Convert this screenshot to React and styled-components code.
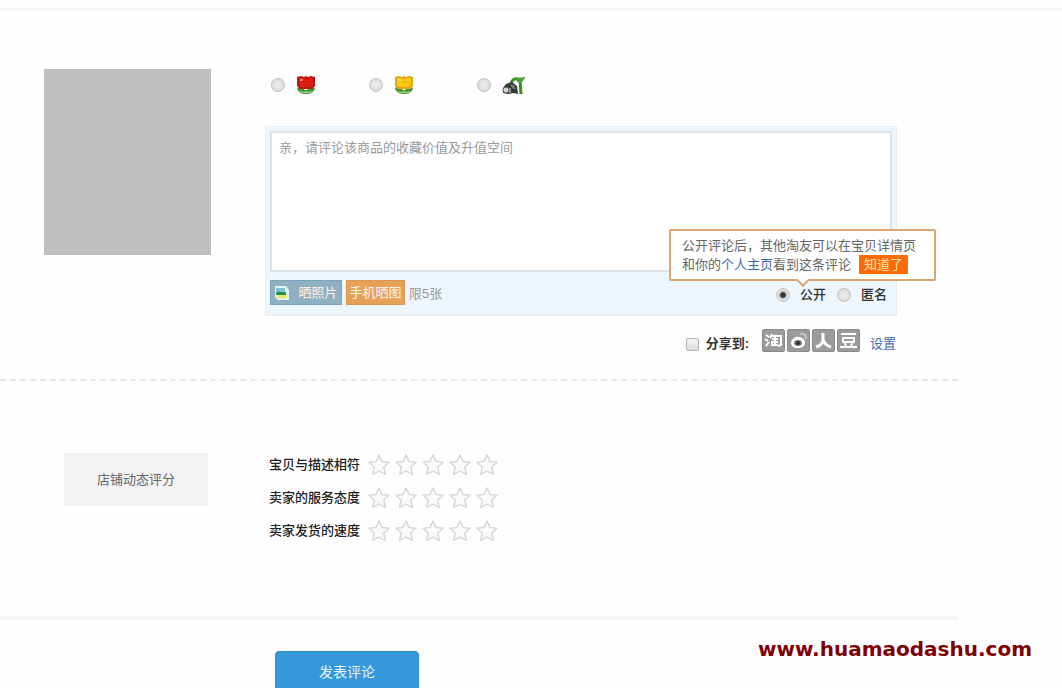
import React from 'react';
import styled, { createGlobalStyle } from 'styled-components';

const GlobalStyle = createGlobalStyle`
  *, *::before, *::after { box-sizing: border-box; }
  html { scrollbar-width: none; }
  body {
    margin: 0;
    background: #fefefe;
    color: #333;
    font: 13px/20px "Liberation Sans", "Noto Sans CJK SC", sans-serif;
  }
  button, input, textarea { font: inherit; margin: 0; }
`;

const Page = styled.div`
  padding-top: 8px;
`;

const Form = styled.form`
  border-top: 3px solid #f6f6f6;
`;

const Section = styled.section`
  display: flex;
  align-items: flex-start;
  margin-right: 104px;
`;

const ReviewSection = styled(Section)`
  padding: 58px 61px 25px 44px;
  gap: 54px;
  border-bottom: 2px dashed #e9e9e9;
`;

const RatingSection = styled(Section)`
  padding: 72px 61px 73px 64px;
  gap: 61px;
  border-bottom: 4px solid #f5f5f5;
`;

const Photo = styled.div`
  flex: none;
  width: 167px;
  height: 186px;
  background: #bfbfbf;
`;

const ReviewBody = styled.div`
  flex: 1;
  min-width: 0;
`;

const MoodRow = styled.div`
  display: flex;
  height: 32px;
  align-items: center;
  padding-left: 6px;
`;

const Mood = styled.label`
  display: flex;
  align-items: center;
  gap: 11px;
  width: ${(p) => p.$width}px;
`;

const Radio = styled.input.attrs({ type: 'radio' })`
  appearance: none;
  flex: none;
  width: 14px;
  height: 14px;
  border: 1px solid #c4c4c4;
  border-radius: 50%;
  background: radial-gradient(circle, #e9e9e9 30%, #cfcfcf);
  &:checked {
    background: radial-gradient(circle, #333 0 2px, #ddd 4px);
  }
`;

const Check = styled.input.attrs({ type: 'checkbox' })`
  appearance: none;
  width: 13px;
  height: 13px;
  border: 1px solid #b5b5b5;
  border-radius: 2px;
  background: linear-gradient(#f4f4f4, #dcdcdc);
`;

const Editor = styled.div`
  margin-top: 25px;
  padding: 4px;
  border: 1px solid #e3f0f7;
  background: #edf6fc;
`;

const TextArea = styled.textarea`
  display: block;
  width: 100%;
  height: 141px;
  padding: 5px 7px;
  border: 2px solid #dbe3e8;
  background: #fff;
  resize: none;
  outline: none;
  &::placeholder { color: #999; opacity: 1; }
`;

const Toolbar = styled.div`
  display: flex;
  align-items: flex-start;
  gap: 4px;
  height: 39px;
  padding-top: 8px;
`;

const UploadButton = styled.button`
  display: flex;
  align-items: center;
  justify-content: center;
  gap: 8px;
  height: 25px;
  width: ${(p) => p.$width}px;
  padding: 0;
  border: 1px solid ${(p) => p.$edge};
  background: ${(p) => p.$fill};
  color: #fff3e6;
  white-space: nowrap;
`;

const Limit = styled.span`
  padding-top: 4px;
  color: #999;
`;

const Visibility = styled.div`
  position: relative;
  display: flex;
  margin-left: auto;
  padding: 5px 5px 0 0;
  gap: 11px;
`;

const Option = styled.label`
  display: flex;
  align-items: center;
  gap: 10px;
  font-weight: 500;
`;

const Tip = styled.div`
  position: absolute;
  right: -44px;
  bottom: 24px;
  width: 267px;
  padding: 5px 11px;
  border: 2px solid #d9a673;
  border-radius: 2px;
  background: #fff;
  color: #666;
  line-height: 19px;
  white-space: nowrap;
  &::after {
    content: "";
    position: absolute;
    left: 127px;
    bottom: -6px;
    width: 10px;
    height: 10px;
    border: solid #d9a673;
    border-width: 0 2px 2px 0;
    background: #fff;
    transform: rotate(45deg);
  }
`;

const Link = styled.a`
  color: #3f6ba8;
  text-decoration: none;
`;

const TipButton = styled.button`
  height: 19px;
  width: 49px;
  margin-left: 8px;
  padding: 0;
  border: 0;
  background: #fb6a04;
  color: #ffe2b8;
  line-height: 19px;
  vertical-align: top;
`;

const ShareRow = styled.div`
  display: flex;
  justify-content: flex-end;
  align-items: center;
  margin-top: 10px;
  padding-right: 1px;
  gap: 10px;
`;

const ShareLabel = styled.label`
  display: flex;
  align-items: center;
  gap: 7px;
  padding: 8px 3px 0 0;
  font-weight: bold;
`;

const ShareList = styled.div`
  display: flex;
  gap: 2px;
`;

const ShareButton = styled.button`
  display: grid;
  place-items: center;
  width: 23px;
  height: 23px;
  padding: 0;
  border: 1px solid #8a8a8a;
  border-radius: 2px;
  background: #9b9b9b;
  color: #fff;
`;

const SettingLink = styled(Link)`
  padding-top: 8px;
`;

const ShopScore = styled.h2`
  flex: none;
  width: 144px;
  margin: 0;
  padding: 17px 0 16px;
  background: #f2f2f2;
  color: #666;
  font-size: 13px;
  font-weight: normal;
  text-align: center;
`;

const Ratings = styled.div`
  display: grid;
  gap: 9px;
`;

const RatingRow = styled.div`
  display: flex;
  align-items: center;
  gap: 7px;
  height: 24px;
`;

const RatingName = styled.span`
  width: 92px;
  color: #222;
  font-weight: 500;
`;

const Stars = styled.div`
  display: flex;
  gap: 5px;
`;

const StarButton = styled.button`
  display: block;
  padding: 0;
  border: 0;
  background: none;
  svg { display: block; }
`;

const Footer = styled.footer`
  display: flex;
  justify-content: space-between;
  align-items: flex-start;
  padding: 31px 30px 0 275px;
`;

const Submit = styled.button`
  width: 144px;
  height: 42px;
  padding: 0;
  border: 1px solid #2b88cb;
  border-radius: 4px;
  background: #3498db;
  color: #e4f4ff;
  font-size: 14px;
`;

const SiteLink = styled.a`
  margin-top: -14px;
  color: #7d0205;
  font: bold 20px/24px "DejaVu Sans", sans-serif;
  text-decoration: none;
`;

function Flower({ petal, dark, light }) {
  return (
    <svg width="20" height="20" viewBox="0 0 20 20" aria-hidden="true">
      <path d="M1 13c3-1 6 0 8 2h2c2-2 5-3 8-2-1 4-4 6-9 6s-8-2-9-6z" fill="#4a9435" />
      <path d="M3 16l5 1 2-1 2 1 5-1-3 2H6z" fill="#a6cf8a" />
      <path d="M1 2l4-1 3 1 2-1 2 1 3-1 4 1v9l-3 3H4l-3-3z" fill={dark} />
      <path d="M3 3h3l4 1 4-1h3v8l-3 1H6l-3-1z" fill={petal} />
      <path d="M4 4h3v2H4z" fill={light} />
      <path d="M9 6h5v2H9z" fill={dark} opacity="0.5" />
    </svg>
  );
}

function WiltedPlant() {
  return (
    <svg width="24" height="20" viewBox="0 0 24 20" aria-hidden="true">
      <path d="M9 8c2-5 6-5 9-3l1 14" fill="none" stroke="#3c8b25" strokeWidth="3" />
      <path d="M14 4c2-3 7 0 9-3-1 6-4 7-8 6z" fill="#4da331" />
      <path d="M4 9l6-2 5 4 1 8-5-1-4 1-6-1v-5z" fill="#343735" />
      <path d="M8 9l4 1 2 5-4-2z" fill="#737977" />
      <circle cx="4" cy="15" r="3" fill="#c9cdca" stroke="#555" />
      <path d="M3 15h3M8 13v5" stroke="#eee" />
    </svg>
  );
}

function PictureIcon() {
  return (
    <svg width="16" height="16" viewBox="0 0 16 16" aria-hidden="true">
      <path d="M1 1h11l3 4v10H4l-3-3z" fill="#e7f3f2" />
      <path d="M2 3h9v7H2z" fill="#7fc3dc" />
      <path d="M2 8c3-3 6 0 10-1v3H2z" fill="#278b49" />
      <path d="M4 10h9v3H4z" fill="#e6e56e" />
    </svg>
  );
}

function Star() {
  return (
    <svg width="22" height="22" viewBox="0 0 22 22" aria-hidden="true">
      <path
        d="M11 1l3 6.4 7 .8-5.2 4.8 1.5 7.3L11 17.2l-6.3 3.1L6.2 13 1 8.2l7-.8z"
        fill="#fafafa"
        stroke="#d8d8d8"
        strokeWidth="1.5"
        strokeLinejoin="round"
      />
    </svg>
  );
}

function WeiboIcon() {
  return (
    <svg width="19" height="19" viewBox="0 0 19 19" aria-hidden="true">
      <path d="M2 12c0-4 5-7 8-6 2 0 6 2 6 6 0 3-3 5-7 5s-7-2-7-5z" fill="#fff" />
      <ellipse cx="9" cy="12" rx="4" ry="3" fill="#777" />
      <circle cx="9" cy="12" r="2" fill="#333" />
      <path d="M11 3c4-1 6 1 6 5" fill="none" stroke="#c4c4c4" strokeWidth="2" />
    </svg>
  );
}

function TaoIcon() {
  return (
    <svg width="19" height="19" viewBox="0 0 19 19" aria-hidden="true" fill="none" stroke="#fff" strokeWidth="2">
      <path d="M2 4l3 2M1 8l3 2M2 15l3-4M8 3L6 7M7 5h10v9l-3 1M8 8h6M7 11h7M11 6v8M8 12v2h6" />
    </svg>
  );
}

function RenIcon() {
  return (
    <svg width="19" height="19" viewBox="0 0 19 19" aria-hidden="true" fill="none" stroke="#fff" strokeWidth="3">
      <path d="M9 2v6c0 4-3 7-7 8M9 8c1 4 4 7 8 8" />
    </svg>
  );
}

function DouIcon() {
  return (
    <svg width="19" height="19" viewBox="0 0 19 19" aria-hidden="true" fill="none" stroke="#fff" strokeWidth="2">
      <path d="M2 3h15M4 7h11v4H4zM6 12l1 4M13 12l-1 4M1 16h17" />
    </svg>
  );
}

const ratings = ['宝贝与描述相符', '卖家的服务态度', '卖家发货的速度'];
const shares = [
  ['淘宝', TaoIcon],
  ['微博', WeiboIcon],
  ['人人', RenIcon],
  ['豆瓣', DouIcon],
];

export default function App() {
  return (
    <Page>
      <GlobalStyle />
      <Form onSubmit={(e) => e.preventDefault()}>
        <ReviewSection>
          <Photo />
          <ReviewBody>
            <MoodRow>
              <Mood $width={98}>
                <Radio name="mood" aria-label="好评" />
                <Flower petal="#de1c12" dark="#b51a12" light="#f57a68" />
              </Mood>
              <Mood $width={108}>
                <Radio name="mood" aria-label="中评" />
                <Flower petal="#fbc60c" dark="#e0a516" light="#fbe06a" />
              </Mood>
              <Mood $width={60}>
                <Radio name="mood" aria-label="差评" />
                <WiltedPlant />
              </Mood>
            </MoodRow>
            <Editor>
              <TextArea aria-label="评论" placeholder="亲，请评论该商品的收藏价值及升值空间" />
              <Toolbar>
                <UploadButton type="button" $width={72} $fill="#8fb0c3" $edge="#7fa3b8">
                  <PictureIcon />
                  晒照片
                </UploadButton>
                <UploadButton type="button" $width={59} $fill="#e5a05a" $edge="#dc9850">
                  手机晒图
                </UploadButton>
                <Limit>限5张</Limit>
                <Visibility>
                  <Option>
                    <Radio name="visibility" defaultChecked />
                    公开
                  </Option>
                  <Option>
                    <Radio name="visibility" />
                    匿名
                  </Option>
                  <Tip role="tooltip">
                    公开评论后，其他淘友可以在宝贝详情页
                    <br />
                    和你的<Link href="#home">个人主页</Link>看到这条评论
                    <TipButton type="button">知道了</TipButton>
                  </Tip>
                </Visibility>
              </Toolbar>
            </Editor>
            <ShareRow>
              <ShareLabel>
                <Check />
                分享到:
              </ShareLabel>
              <ShareList>
                {shares.map(([name, Icon]) => (
                  <ShareButton key={name} type="button" aria-label={name}>
                    <Icon />
                  </ShareButton>
                ))}
              </ShareList>
              <SettingLink href="#settings">设置</SettingLink>
            </ShareRow>
          </ReviewBody>
        </ReviewSection>
        <RatingSection>
          <ShopScore>店铺动态评分</ShopScore>
          <Ratings>
            {ratings.map((name) => (
              <RatingRow key={name} role="group" aria-label={name}>
                <RatingName>{name}</RatingName>
                <Stars>
                  {[1, 2, 3, 4, 5].map((n) => (
                    <StarButton key={n} type="button" aria-label={`${n}星`}>
                      <Star />
                    </StarButton>
                  ))}
                </Stars>
              </RatingRow>
            ))}
          </Ratings>
        </RatingSection>
        <Footer>
          <Submit type="submit">发表评论</Submit>
          <SiteLink href="#site">www.huamaodashu.com</SiteLink>
        </Footer>
      </Form>
    </Page>
  );
}
